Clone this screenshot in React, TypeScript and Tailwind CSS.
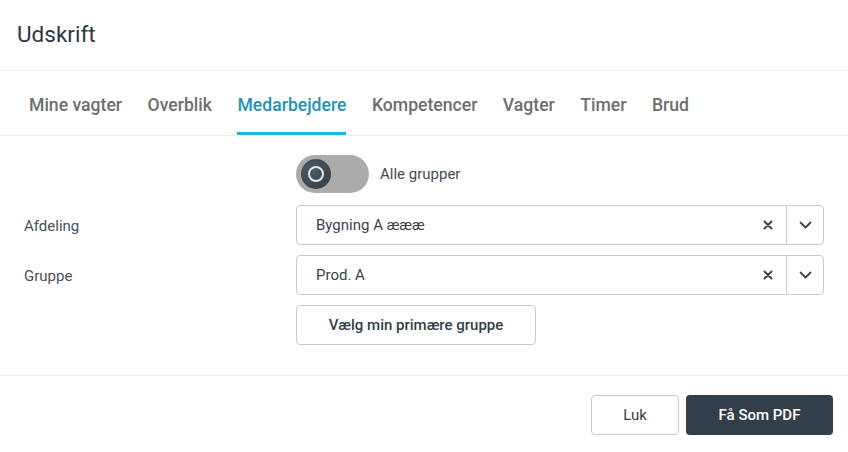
import { useState } from "react";

const tabs = ["Mine vagter", "Overblik", "Medarbejdere", "Kompetencer", "Vagter", "Timer", "Brud"];

function SelectBox({ value }: { value: string }) {
  return (
    <div className="flex h-[40px] w-full items-center rounded-[4px] border border-[#c5cbd0] bg-white">
      <div className="flex-1 pl-[19px] text-[15px] text-[#3b434a]">{value}</div>
      <div className="flex h-full w-[38px] items-center justify-center pl-[2px]">
        <svg width="10" height="10" viewBox="0 0 10 10">
          <path d="M1.5 1.5 L8.5 8.5 M8.5 1.5 L1.5 8.5" stroke="#3c464f" strokeWidth="2" strokeLinecap="round" />
        </svg>
      </div>
      <div className="h-full w-px bg-[#c5cbd0]" />
      <div className="flex h-full w-[36px] items-center justify-center">
        <svg width="13" height="8" viewBox="0 0 13 8">
          <path d="M1.5 1.5 L6.5 6.5 L11.5 1.5" stroke="#3c464f" strokeWidth="1.8" fill="none" strokeLinecap="round" strokeLinejoin="round" />
        </svg>
      </div>
    </div>
  );
}

export default function App() {
  const [active, setActive] = useState("Medarbejdere");

  return (
    <div className="h-[452px] w-[848px] bg-white font-['Roboto',sans-serif]">
      {/* Header */}
      <div className="flex h-[71px] items-center border-b border-[#ececec] px-[17px]">
        <h1 className="text-[22.5px] text-[#2c3841]">Udskrift</h1>
      </div>

      {/* Tabs */}
      <div className="flex h-[65px] gap-[25.5px] border-b border-[#ececec] pl-[29px]">
        {tabs.map((t) => (
          <button
            key={t}
            onClick={() => setActive(t)}
            className={
              t === active
                ? "flex h-full items-center border-b-[3px] border-[#1bb8e4] pt-[7px] text-[17.6px] font-medium text-[#2592b5]"
                : "flex h-full items-center border-b-[3px] border-transparent pt-[7px] text-[17.6px] font-medium text-[#6e6e6e]"
            }
          >
            {t}
          </button>
        ))}
      </div>

      {/* Body */}
      <div className="flex flex-col pb-[30px] pl-[24px] pr-[24px] pt-[19px]">
        <div className="flex items-center">
          <div className="w-[272px]" />
          <div className="flex h-[38px] w-[73px] items-center rounded-full bg-[#ababab] pl-[5px]">
            <div className="flex h-[30px] w-[30px] items-center justify-center rounded-full bg-[radial-gradient(circle_at_35%_35%,#4d5b66,#2f3a42)]">
              <div className="h-[16px] w-[16px] rounded-full border-2 border-[#e3e6e8]" />
            </div>
          </div>
          <span className="ml-[11px] text-[15px] text-[#454c52]">Alle grupper</span>
        </div>

        <div className="mt-[12px] flex items-center">
          <label className="w-[272px] pt-[2px] text-[15px] text-[#4a5157]">Afdeling</label>
          <div className="flex-1">
            <SelectBox value="Bygning A æææ" />
          </div>
        </div>

        <div className="mt-[10px] flex items-center">
          <label className="w-[272px] pt-[2px] text-[15px] text-[#4a5157]">Gruppe</label>
          <div className="flex-1">
            <SelectBox value="Prod. A" />
          </div>
        </div>

        <div className="mt-[10px] flex items-center">
          <div className="w-[272px]" />
          <button className="flex h-[40px] w-[240px] items-center justify-center rounded-[4px] border border-[#c5cbd0] bg-white text-[15px] font-medium text-[#333e47]">
            Vælg min primære gruppe
          </button>
        </div>
      </div>

      {/* Footer */}
      <div className="flex justify-end gap-[7px] border-t border-[#ececec] pr-[15px] pt-[19px]">
        <button className="flex h-[40px] w-[88px] items-center justify-center rounded-[4px] border border-[#c5cbd0] bg-white text-[15px] text-[#333e47]">
          Luk
        </button>
        <button className="flex h-[40px] w-[147px] items-center justify-center rounded-[4px] bg-[#323e48] text-[15px] font-medium text-white">
          Få Som PDF
        </button>
      </div>
    </div>
  );
}
